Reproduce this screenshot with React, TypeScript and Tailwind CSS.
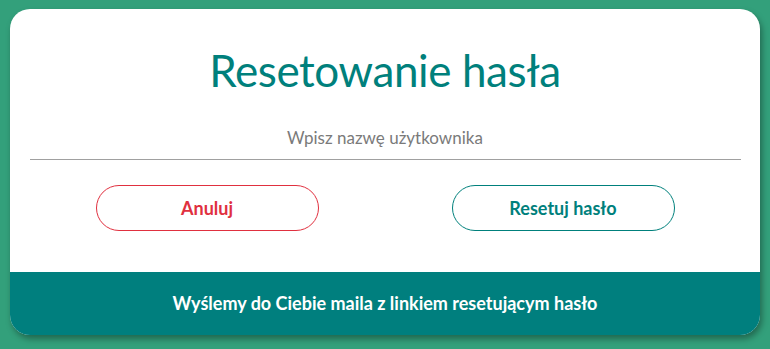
export default function App() {
  return (
    <div
      className="flex h-[349px] w-[770px] items-start justify-center bg-[#33a07b] pt-[9px]"
      style={{ fontFamily: "Lato, 'Open Sans', sans-serif" }}
    >
      <div className="flex h-[326px] w-[750px] flex-col overflow-hidden rounded-[20px] bg-white shadow-[2px_4px_6px_rgba(0,0,0,0.35)]">
        <div className="flex flex-1 flex-col items-center">
          <h1 className="mt-[35px] text-[44px] leading-[52px] font-normal tracking-[-0.4px] text-[#00807c]">
            Resetowanie hasła
          </h1>
          <div className="mt-[32px] w-[711px] border-b border-[#a0a0a0] pb-[11px] text-center text-[17px] leading-[20px] text-[#7a7a7a]">
            Wpisz nazwę użytkownika
          </div>
          <div className="mt-[25px] flex w-[579px] justify-between">
            <button className="h-[46px] w-[223px] rounded-full border border-[#e0303f] text-[18px] font-bold text-[#e0303f]">
              Anuluj
            </button>
            <button className="h-[46px] w-[223px] rounded-full border border-[#00807c] text-[18px] font-bold text-[#00807c]">
              Resetuj hasło
            </button>
          </div>
        </div>
        <div className="flex h-[63px] items-center justify-center bg-[#007f7e] text-[18px] font-bold text-white">
          Wyślemy do Ciebie maila z linkiem resetującym hasło
        </div>
      </div>
    </div>
  );
}
